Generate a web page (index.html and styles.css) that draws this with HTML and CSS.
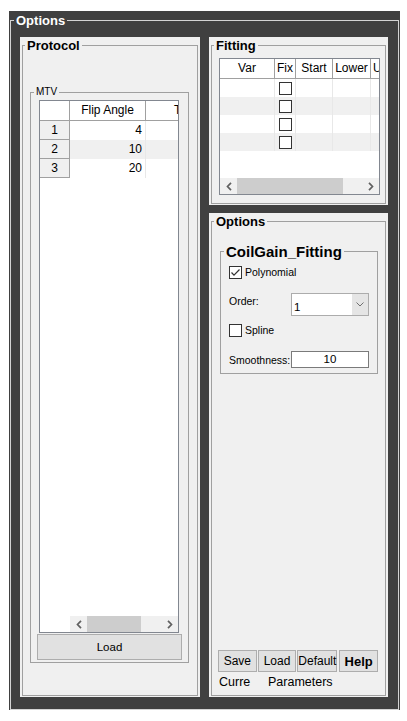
FILE: index.html
```html
<!DOCTYPE html>
<html>
<head>
<meta charset="utf-8">
<title>Options</title>
<link rel="stylesheet" href="styles.css">
</head>
<body>
<div class="window">
  <fieldset class="outer">
    <legend class="outer-title">Options</legend>
    <div class="main-body">

      <div class="panel panel-protocol">
        <fieldset class="group">
          <legend class="title">Protocol</legend>
          <div class="protocol-body">
            <fieldset class="group">
              <legend class="title-small">MTV</legend>
              <div class="mtv-body">
                <div class="uitable mtv-table">
                  <div class="trow thead">
                    <div class="cell hcell corner"></div>
                    <div class="cell hcell col-flip">Flip Angle</div>
                    <div class="cell hcell col-tr">TR</div>
                  </div>
                  <div class="trow mrow">
                    <div class="cell rowhead">1</div>
                    <div class="cell num col-flip">4</div>
                    <div class="cell col-tr"></div>
                  </div>
                  <div class="trow mrow alt">
                    <div class="cell rowhead">2</div>
                    <div class="cell num col-flip">10</div>
                    <div class="cell col-tr"></div>
                  </div>
                  <div class="trow mrow">
                    <div class="cell rowhead">3</div>
                    <div class="cell num col-flip">20</div>
                    <div class="cell col-tr"></div>
                  </div>
                  <div class="tfill"></div>
                  <div class="hscroll">
                    <div class="hs-blank"></div>
                    <div class="hs-track">
                      <div class="hs-arrow"><svg width="6" height="9" viewBox="0 0 6 9"><polyline points="5,0.8 1.5,4.5 5,8.2" fill="none" stroke="#606060" stroke-width="1.7"/></svg></div>
                      <div class="hs-thumb thumb-mtv"></div>
                      <div class="hs-gap"></div>
                      <div class="hs-arrow"><svg width="6" height="9" viewBox="0 0 6 9"><polyline points="1,0.8 4.5,4.5 1,8.2" fill="none" stroke="#606060" stroke-width="1.7"/></svg></div>
                    </div>
                  </div>
                </div>
                <button class="btn btn-load">Load</button>
              </div>
            </fieldset>
          </div>
        </fieldset>
      </div>

      <div class="col-right">
        <div class="panel panel-fitting">
          <fieldset class="group">
            <legend class="title">Fitting</legend>
            <div class="fitting-body">
              <div class="uitable fit-table">
                <div class="trow thead">
                  <div class="cell hcell c-var">Var</div>
                  <div class="cell hcell c-fix">Fix</div>
                  <div class="cell hcell c-start">Start</div>
                  <div class="cell hcell c-lower">Lower</div>
                  <div class="cell hcell c-u">U</div>
                </div>
                <div class="trow frow">
                  <div class="cell c-var"></div>
                  <div class="cell c-fix"><span class="chk"></span></div>
                  <div class="cell c-start"></div>
                  <div class="cell c-lower"></div>
                  <div class="cell c-u"></div>
                </div>
                <div class="trow frow alt">
                  <div class="cell c-var"></div>
                  <div class="cell c-fix"><span class="chk"></span></div>
                  <div class="cell c-start"></div>
                  <div class="cell c-lower"></div>
                  <div class="cell c-u"></div>
                </div>
                <div class="trow frow">
                  <div class="cell c-var"></div>
                  <div class="cell c-fix"><span class="chk"></span></div>
                  <div class="cell c-start"></div>
                  <div class="cell c-lower"></div>
                  <div class="cell c-u"></div>
                </div>
                <div class="trow frow alt">
                  <div class="cell c-var"></div>
                  <div class="cell c-fix"><span class="chk"></span></div>
                  <div class="cell c-start"></div>
                  <div class="cell c-lower"></div>
                  <div class="cell c-u"></div>
                </div>
                <div class="tfill"></div>
                <div class="hscroll">
                  <div class="hs-track">
                    <div class="hs-arrow"><svg width="6" height="9" viewBox="0 0 6 9"><polyline points="5,0.8 1.5,4.5 5,8.2" fill="none" stroke="#606060" stroke-width="1.7"/></svg></div>
                    <div class="hs-thumb thumb-fit"></div>
                    <div class="hs-gap"></div>
                    <div class="hs-arrow"><svg width="6" height="9" viewBox="0 0 6 9"><polyline points="1,0.8 4.5,4.5 1,8.2" fill="none" stroke="#606060" stroke-width="1.7"/></svg></div>
                  </div>
                </div>
              </div>
            </div>
          </fieldset>
        </div>

        <div class="panel panel-options">
          <fieldset class="group">
            <legend class="title">Options</legend>
            <div class="options-body">
              <fieldset class="group coil">
                <legend class="title-large">CoilGain_Fitting</legend>
                <div class="coil-body">
                  <label class="check-row">
                    <span class="chk chk-on"><svg width="11" height="11" viewBox="0 0 11 11"><polyline points="1.5,5.5 4,8.2 9.5,2.5" fill="none" stroke="#333" stroke-width="1.2"/></svg></span>
                    <span>Polynomial</span>
                  </label>
                  <div class="field-row order-row">
                    <span class="lbl lbl-order">Order:</span>
                    <div class="select">
                      <span class="select-value">1</span>
                      <span class="select-btn"><svg width="8" height="5" viewBox="0 0 8 5"><polyline points="0.5,0.5 4,4 7.5,0.5" fill="none" stroke="#707070" stroke-width="1"/></svg></span>
                    </div>
                  </div>
                  <label class="check-row spline-row">
                    <span class="chk"></span>
                    <span>Spline</span>
                  </label>
                  <div class="field-row smooth-row">
                    <span class="lbl">Smoothness:</span>
                    <div class="edit">10</div>
                  </div>
                </div>
              </fieldset>
              <div class="btn-row">
                <button class="btn btn-sm">Save</button>
                <button class="btn btn-sm">Load</button>
                <button class="btn btn-sm">Default</button>
                <button class="btn btn-sm btn-help">Help</button>
              </div>
              <div class="status">
                <span class="st-cur">Curre</span>
                <span class="st-par">Parameters</span>
              </div>
            </div>
          </fieldset>
        </div>
      </div>

    </div>
  </fieldset>
</div>
</body>
</html>
```
FILE: styles.css
```css
* { box-sizing: border-box; }
html, body { margin: 0; padding: 0; background: #fff; }
body { font-family: "Liberation Sans", Arial, sans-serif; color: #000; }

.window {
  margin: 11px 0 0 9px;
  width: 391px;
  padding: 1px 1px 0 1px;
  background: #404040;
}
.outer {
  margin: 0;
  padding: 0;
  min-width: 0;
  border: 1px solid #d4d4d4;
  background: #404040;
}
.outer-title {
  margin-left: 3px;
  padding: 1px 2px 0 2px;
  font-weight: bold;
  font-size: 13px;
  line-height: 16px;
  color: #fff;
}
.main-body {
  display: flex;
  gap: 9px;
  height: 680px;
  padding: 8px 9px 12px 9px;
}

.panel { background: #f0f0f0; padding: 1px 2px; }
.panel-protocol { width: 180px; height: 660px; flex: none; }
.col-right { width: 179px; flex: none; display: flex; flex-direction: column; gap: 8px; }
.panel-fitting { height: 168px; }
.panel-options { height: 484px; }

.group {
  margin: 0;
  padding: 0;
  min-width: 0;
  border: 1px solid #a0a0a0;
}
.title {
  margin-left: 2px;
  padding: 0 2px;
  font-weight: bold;
  font-size: 13px;
  line-height: 15px;
}
.title-small {
  margin-left: 3px;
  padding: 0 2px;
  font-size: 10px;
  line-height: 12px;
}
.title-large {
  margin-left: 3px;
  padding: 0 2px;
  font-weight: bold;
  font-size: 15px;
  line-height: 17px;
}

/* Protocol */
.protocol-body { height: 642px; padding: 33px 8px 0 7px; }
.mtv-body {
  height: 564px;
  padding: 2px 6px;
  display: flex;
  flex-direction: column;
  gap: 1px;
}
.mtv-table { height: 533px; margin: 0 3px 0 2px; flex: none; }

/* tables */
.uitable {
  border: 1px solid #828790;
  background: #fff;
  display: flex;
  flex-direction: column;
  overflow: hidden;
}
.trow { display: flex; flex: none; height: 18px; }
.thead { height: 20px; border-bottom: 1px solid #a0a0a0; background: #fff; }
.cell {
  flex: none;
  height: 100%;
  font-size: 12px;
  line-height: 18px;
  white-space: nowrap;
  overflow: hidden;
  border-right: 1px solid #e8e8e8;
}
.hcell { border-right-color: #a0a0a0; text-align: center; line-height: 19px; }
.alt { background: #f0f0f0; }

.mrow { height: 19px; }
.corner { width: 30px; }
.rowhead {
  width: 30px;
  background: #f0f0f0;
  border-right: 1px solid #a0a0a0;
  border-bottom: 1px solid #a0a0a0;
  text-align: center;
}
.col-flip { width: 76px; }
.num { text-align: right; padding-right: 3px; }
.col-tr { width: 60px; border-right: none; }
.thead .col-tr { text-align: left; padding-left: 28px; }

.c-var { width: 55px; }
.c-fix { width: 21px; display: flex; align-items: center; justify-content: center; }
.c-start { width: 37px; }
.c-lower { width: 38px; }
.c-u { width: 20px; border-right: none; }
.thead .c-u { text-align: left; padding-left: 2px; }

.tfill { flex: 1; }
.hscroll { display: flex; height: 16px; flex: none; }
.hs-blank { width: 30px; background: #fff; }
.hs-track { flex: 1; display: flex; background: #f0f0f0; }
.hs-arrow { width: 17px; flex: none; display: flex; align-items: center; justify-content: center; }
.hs-thumb { background: #cdcdcd; flex: none; }
.thumb-mtv { width: 54px; }
.thumb-fit { width: 106px; }
.hs-gap { flex: 1; }

.chk {
  width: 13px;
  height: 13px;
  flex: none;
  border: 1px solid #333;
  background: #fff;
  display: flex;
  align-items: center;
  justify-content: center;
}

/* buttons */
.btn {
  margin: 0;
  padding: 0;
  border: 1px solid #adadad;
  background: #e1e1e1;
  font-family: "Liberation Sans", Arial, sans-serif;
  color: #000;
}
.btn-load { height: 26px; font-size: 11.5px; flex: none; }

/* Fitting */
.fitting-body { height: 150px; padding: 5px 5px 8px 7px; }
.fit-table { height: 137px; }

/* Options */
.options-body {
  height: 466px;
  padding: 14px 7px 6px 6px;
  display: flex;
  flex-direction: column;
}
.coil { margin-left: 2px; width: 158px; flex: none; }
.coil-body {
  height: 113px;
  padding: 6px 0 5px 8px;
  display: flex;
  flex-direction: column;
}
.check-row {
  display: flex;
  align-items: center;
  gap: 3px;
  height: 13px;
  font-size: 10.5px;
  line-height: 13px;
}
.field-row { display: flex; }
.order-row { margin-top: 14px; height: 23px; align-items: flex-start; }
.spline-row { margin-top: 8px; }
.smooth-row { margin-top: 14px; height: 17px; align-items: center; }
.lbl { width: 62px; flex: none; font-size: 10.5px; line-height: 12px; white-space: nowrap; }
.lbl-order { margin-top: 2px; }
.select {
  width: 78px;
  height: 23px;
  border: 1px solid #acacac;
  background: #fff;
  display: flex;
}
.select-value { flex: 1; font-size: 11.5px; line-height: 14px; padding: 6px 0 0 2px; }
.select-btn {
  width: 16px;
  background: #e5e5e5;
  display: flex;
  align-items: center;
  justify-content: center;
}
.edit {
  width: 78px;
  height: 17px;
  border: 1px solid #7a7a7a;
  background: #fff;
  text-align: center;
  font-size: 11.5px;
  line-height: 15px;
}

.btn-row { margin-top: auto; display: flex; gap: 1px; height: 22px; }
.btn-sm { width: 40px; height: 22px; font-size: 12px; }
.btn-help { margin-left: 1px; font-weight: bold; font-size: 13px; }

.status { margin-top: 3px; height: 14px; display: flex; font-size: 12.5px; line-height: 14px; padding-left: 1px; }
.st-cur { width: 49px; overflow: hidden; white-space: nowrap; }
```
